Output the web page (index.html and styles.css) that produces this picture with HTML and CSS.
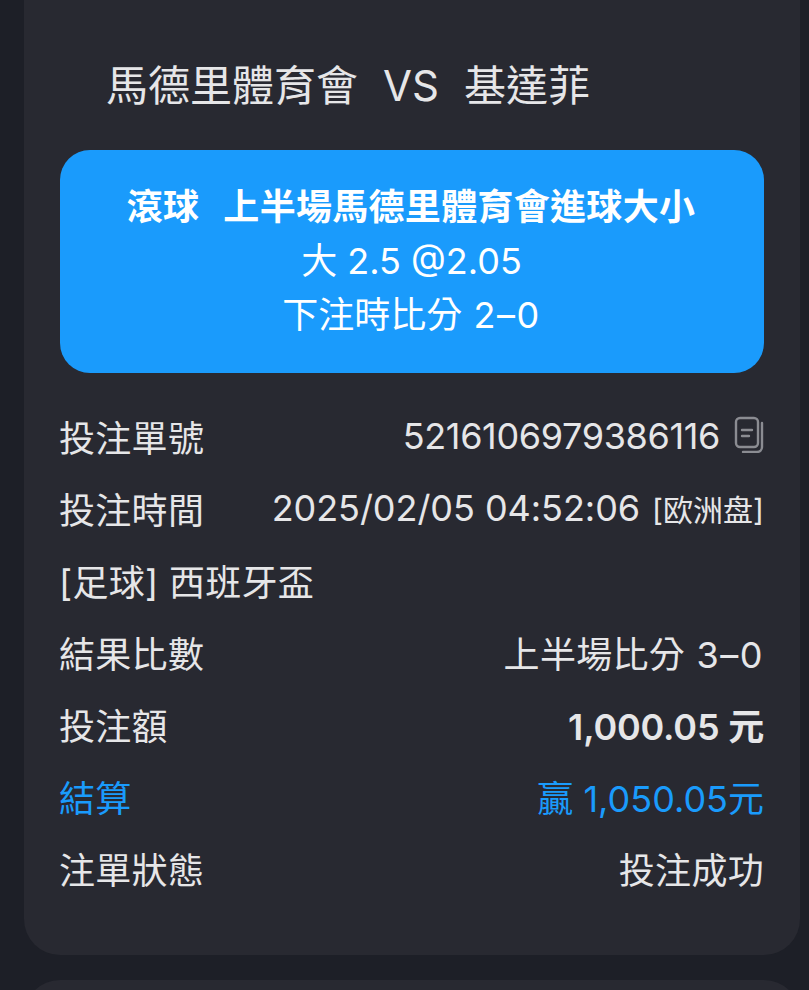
FILE: index.html
```html
<!DOCTYPE html>
<html>
<head>
  <title>注單詳情</title>
  <link rel="stylesheet" href="styles.css">
</head>
<body>
  <div class="card">
    <h1 class="match">馬德里體育會<span class="vs">VS</span>基達菲</h1>
    <div class="banner">
      <div class="banner-title"><span class="live">滾球</span>上半場馬德里體育會進球大小</div>
      <div class="banner-line">大 2.5 @2.05</div>
      <div class="banner-line">下注時比分 <span class="score">2–0</span></div>
    </div>
    <div class="rows">
      <div class="row">
        <span>投注單號</span>
        <span class="value"><span class="order-no">5216106979386116</span>
          <svg class="copy" width="30" height="37" viewBox="0 0 30 37" fill="none" stroke="#8b8c92" stroke-width="2.4" stroke-linecap="round">
            <rect x="2" y="2" width="22" height="29" rx="4"/>
            <path d="M28 7v24a5 5 0 0 1-5 5H9"/>
            <path d="M8 14h10M8 20h7"/>
          </svg>
        </span>
      </div>
      <div class="row">
        <span>投注時間</span>
        <span class="value"><span class="stamp">2025/02/05 04:52:06</span><small>[欧洲盘]</small></span>
      </div>
      <div class="row"><span>[足球] 西班牙盃</span></div>
      <div class="row"><span>結果比數</span><span class="value"><span>上半場比分 <span class="score">3–0</span></span></span></div>
      <div class="row"><span>投注額</span><span class="value strong">1,000.05 元</span></div>
      <div class="row win"><span>結算</span><span class="value">贏 1,050.05元</span></div>
      <div class="row"><span>注單狀態</span><span class="value">投注成功</span></div>
    </div>
  </div>
  <div class="next-card"></div>
</body>
</html>
```

FILE: styles.css
```css
body {
  margin: 0;
  height: 990px;
  overflow: hidden;
  background: #1d1f27;
  color: #e6e6e8;
  font-family: Inter, "Noto Sans CJK TC", sans-serif;
  padding: 0 9px 0 24px;
  box-sizing: border-box;
}
.card {
  height: 955px;
  box-sizing: border-box;
  padding: 56px 36px 0;
  background: #282931;
  border-radius: 0 0 36px 36px;
}
.match {
  margin: 0 0 34px 46px;
  font-size: 42px;
  line-height: 60px;
  font-weight: 400;
}
.vs {
  margin: 0 25px;
}
.banner {
  background: #1a9bfc;
  border-radius: 30px;
  height: 223px;
  padding-top: 30px;
  box-sizing: border-box;
  text-align: center;
  color: #fff;
  font-size: 36px;
  line-height: 54px;
}
.banner-title {
  font-weight: 700;
  letter-spacing: 0.3px;
  margin-right: 2px;
}
.live {
  margin-right: 24px;
}
.banner-line {
  margin-right: 1px;
}
.score {
  letter-spacing: 1.5px;
  margin-left: 1px;
}
.rows {
  margin: 27px 0 0 -1px;
}
.row {
  display: flex;
  justify-content: space-between;
  align-items: center;
  height: 72px;
  font-size: 36px;
  letter-spacing: 0.3px;
}
.value {
  display: flex;
  align-items: center;
  gap: 12px;
}
.order-no {
  letter-spacing: -0.35px;
}
.stamp {
  letter-spacing: -0.05px;
}
.value small {
  font-size: 30px;
  letter-spacing: 0;
}
.strong {
  font-weight: 600;
  letter-spacing: -0.2px;
}
.win {
  color: #1a9bfc;
}
.win .value {
  letter-spacing: 0;
}
.copy {
  margin: 0 0 4px 2px;
}
.next-card {
  height: 40px;
  margin-top: 25px;
  background: #282931;
  border-radius: 36px 36px 0 0;
}
```
